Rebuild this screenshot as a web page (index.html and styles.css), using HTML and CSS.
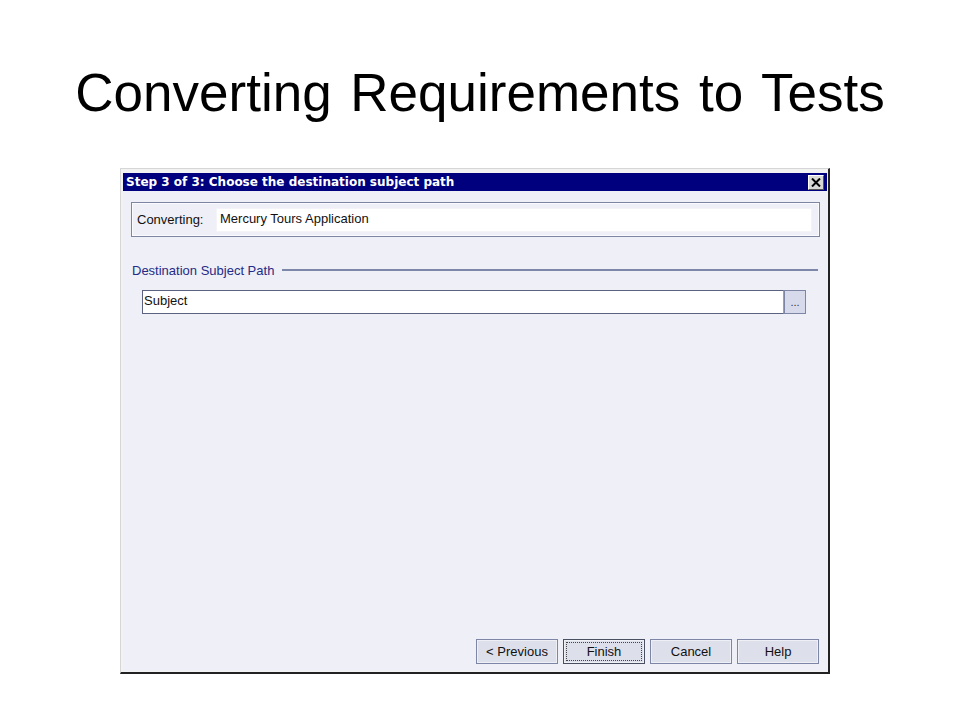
FILE: index.html
```html
<!DOCTYPE html>
<html lang="en">
<head>
    <meta charset="UTF-8">
    <meta name="viewport" content="width=device-width, initial-scale=1.0">
    <title>Converting Requirements to Tests</title>
    <link rel="stylesheet" href="styles.css">
</head>
<body>
    <h1 class="slide-title">Converting Requirements to Tests</h1>

    <div class="window">
        <div class="title-bar">
            <span class="title-text">Step 3 of 3: Choose the destination subject path</span>
            <span class="close-btn">
                <svg width="10" height="9" viewBox="0 0 10 9">
                    <path d="M1 0.5 L9 8.5 M9 0.5 L1 8.5" stroke="#000" stroke-width="2" fill="none"/>
                </svg>
            </span>
        </div>

        <div class="content">
            <!-- what is being converted -->
            <div class="converting-box">
                <span class="converting-label">Converting:</span>
                <div class="converting-value">Mercury Tours Application</div>
            </div>

            <div class="legend">
                <span class="legend-text">Destination Subject Path</span>
                <span class="legend-line"></span>
            </div>

            <div class="path-row">
                <div class="path-field">Subject</div>
                <button class="browse-btn">...</button>
            </div>

            <div class="buttons">
                <button class="btn">&lt; Previous</button>
                <button class="btn btn-default">Finish</button>
                <button class="btn">Cancel</button>
                <button class="btn">Help</button>
            </div>
        </div>
    </div>
</body>
</html>
```

FILE: styles.css
```css
body {
    margin: 0;
    background-color: #ffffff;
    font-family: "Liberation Sans", Arial, sans-serif;
}

.slide-title {
    margin: 63px 0 0;
    font-size: 53px;
    font-weight: normal;
    line-height: 59px;
    text-align: center;
    color: #000;
    word-spacing: 4px;
}

.window {
    box-sizing: border-box;
    width: 710px;
    margin: 46px 0 0 120px;
    padding: 4px 1px 1px 2px;
    background-color: #f2f2f2;
    border-top: 1px solid #d6d6d6;
    border-left: 1px solid #d6d6d6;
    border-right: 2px solid #222;
    border-bottom: 2px solid #222;
}

.title-bar {
    height: 18px;
    background-color: #00007f;
    display: flex;
    align-items: center;
    justify-content: space-between;
    padding: 0 3px;
}

.title-text {
    color: #fff;
    font-family: "DejaVu Sans", Verdana, sans-serif;
    font-weight: bold;
    font-size: 12px;
}

.close-btn {
    box-sizing: border-box;
    width: 16px;
    height: 15px;
    background-color: #d8d8d4;
    border-top: 1px solid #fff;
    border-left: 1px solid #fff;
    border-right: 1px solid #555;
    border-bottom: 1px solid #555;
    display: flex;
    align-items: center;
    justify-content: center;
}

.content {
    height: 480px;
    box-sizing: border-box;
    background-color: #eeeff7;
    padding: 11px 7px 7px 8px;
    display: flex;
    flex-direction: column;
    font-size: 13px;
    color: #111;
}

.converting-box {
    height: 35px;
    box-sizing: border-box;
    border: 1px solid #7f86a2;
    box-shadow: inset 0 0 0 1px #fbfbff;
    display: flex;
    align-items: center;
}

.converting-label {
    width: 79px;
    padding-left: 5px;
}

.converting-value {
    flex: 1;
    height: 24px;
    line-height: 20px;
    margin-right: 7px;
    padding-left: 3px;
    background-color: #fff;
    border: 1px solid #f4f4f8;
    box-sizing: border-box;
}

.legend {
    margin-top: 26px;
    display: flex;
    align-items: center;
    height: 14px;
}

.legend-text {
    color: #252b86;
    padding-left: 1px;
}

.legend-line {
    flex: 1;
    height: 2px;
    margin: 0 2px 0 8px;
    background-color: #7d88a8;
}

.path-row {
    margin: 13px 0 0 11px;
    display: flex;
    height: 24px;
}

.path-field {
    width: 642px;
    box-sizing: border-box;
    background-color: #fff;
    border: 1px solid #5c6280;
    border-right-color: #9aa0b8;
    padding-left: 1px;
    line-height: 20px;
}

.browse-btn {
    width: 22px;
    padding: 0;
    background-color: #d6daea;
    border: 1px solid #7d86a4;
    color: #333;
    font-family: "Liberation Sans", Arial, sans-serif;
    font-size: 11px;
    line-height: 20px;
}

.buttons {
    margin-top: auto;
    display: flex;
    justify-content: flex-end;
    gap: 5px;
    padding-right: 1px;
}

.btn {
    width: 82px;
    height: 25px;
    padding: 0;
    background-color: #dde0eb;
    border: 1px solid #7d86a6;
    box-shadow: inset 0 0 0 1px #eef0f6;
    font-family: "Liberation Sans", Arial, sans-serif;
    font-size: 13px;
    color: #111;
}

.btn-default {
    border-color: #4a4f62;
    outline: 1px dotted #444;
    outline-offset: -4px;
}
```
